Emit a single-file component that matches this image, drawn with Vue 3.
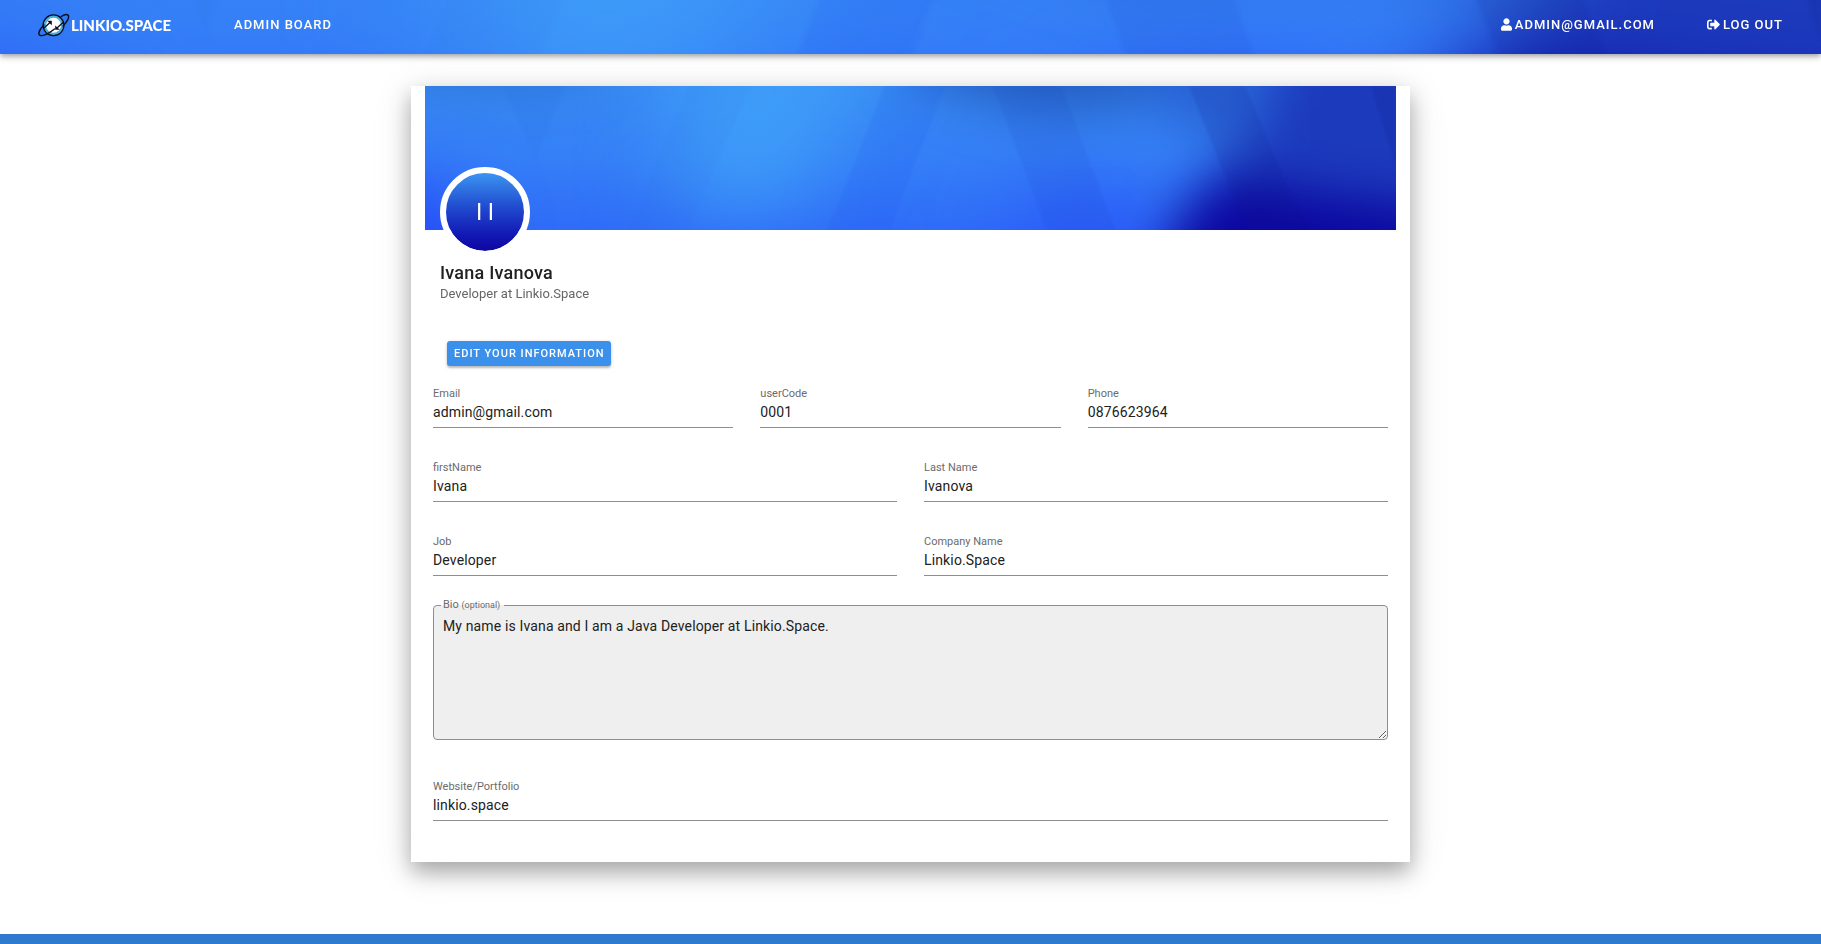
<script setup>
import { reactive } from 'vue'

const user = reactive({
  email: 'admin@gmail.com',
  code: '0001',
  phone: '0876623964',
  first: 'Ivana',
  last: 'Ivanova',
  job: 'Developer',
  company: 'Linkio.Space',
  bio: 'My name is Ivana and I am a Java Developer at Linkio.Space.',
  website: 'linkio.space',
})

const rows = [
  [
    { key: 'email', label: 'Email' },
    { key: 'code', label: 'userCode' },
    { key: 'phone', label: 'Phone' },
  ],
  [
    { key: 'first', label: 'firstName' },
    { key: 'last', label: 'Last Name' },
  ],
  [
    { key: 'job', label: 'Job' },
    { key: 'company', label: 'Company Name' },
  ],
]
</script>

<template>
  <div class="page">
    <svg class="defs" aria-hidden="true">
      <defs>
        <linearGradient id="base" x1="0" y1="0" x2="0" y2="1">
          <stop offset="0" stop-color="#3889f3" />
          <stop offset="0.5" stop-color="#357ff7" />
          <stop offset="1" stop-color="#2f6cf7" />
        </linearGradient>
        <filter id="wide" x="-50%" y="-50%" width="200%" height="200%" color-interpolation-filters="sRGB">
          <feGaussianBlur stdDeviation="42" />
        </filter>
        <filter id="soft" x="-50%" y="-50%" width="200%" height="200%" color-interpolation-filters="sRGB">
          <feGaussianBlur stdDeviation="25" />
        </filter>
        <filter id="edge" x="-10%" y="-10%" width="120%" height="120%" color-interpolation-filters="sRGB">
          <feGaussianBlur stdDeviation="1" />
        </filter>
        <symbol id="backdrop" viewBox="0 0 971 144" preserveAspectRatio="xMidYMid slice">
          <rect width="971" height="144" fill="url(#base)" />
          <g filter="url(#wide)">
            <ellipse cx="-30" cy="180" rx="70" ry="80" fill="#2343f8" />
            <path d="M250 -80 H480 L370 120 H250Z" fill="#3e9cf8" />
            <ellipse cx="660" cy="160" rx="70" ry="50" fill="#2a56f8" />
          </g>
          <g filter="url(#soft)">
            <ellipse cx="60" cy="-30" rx="120" ry="28" fill="#2c70d4" />
            <path d="M480 -70 H760 V0 Q690 36 600 26 Q540 12 480 -14Z" fill="#255fc4" />
            <path d="M720 -70 H900 L820 56 Q760 50 720 16Z" fill="#2862d6" />
            <path d="M880 -70 H1090 V220 H715 L760 110 L830 50Z" fill="#1c3abc" />
            <path d="M700 250 L745 150 L800 92 L860 104 L1100 134 V250Z" fill="#0c06a0" />
          </g>
          <g filter="url(#edge)">
            <path d="M78 0 H140 L110 72Z" fill="#1e60d8" opacity="0.08" />
            <path d="M265 0 H325 L262 144 H203Z" fill="#1e60d8" opacity="0.05" />
            <path d="M460 0 H520 L464 144 H403Z" fill="#1c4ff0" opacity="0.12" />
            <path d="M568 0 H636 L690 144 H622Z" fill="#1a3cb8" opacity="0.09" />
            <path d="M764 0 H820 L880 144 H822Z" fill="#0d1a80" opacity="0.12" />
            <path d="M946 0 H971 V80Z" fill="#0d1a80" opacity="0.14" />
          </g>
        </symbol>
      </defs>
    </svg>

    <header class="navbar">
      <svg class="backdrop" aria-hidden="true"><use href="#backdrop" width="100%" height="100%" /></svg>
      <a class="brand" href="#">
        <svg class="planet" viewBox="0 0 32 24" aria-hidden="true">
          <circle cx="15.500" cy="12.300" r="9" fill="#fff" stroke="#4ab0e0" stroke-width="3" />
          <circle cx="15.500" cy="12.300" r="10.400" fill="none" stroke="#0a0f1c" stroke-width="1.300" />
          <path d="M6 12C1.500 16.500 0 20.500 1.500 22c2 2 9-1 15-6" fill="none" stroke="#0a0f1c" stroke-width="1.400" stroke-linecap="round" />
          <path d="M25 13C29.500 8.500 31.500 4 30.200 2.300c-1.300-1.500-4.200-.600-7 1.200" fill="none" stroke="#0a0f1c" stroke-width="1.400" stroke-linecap="round" />
          <path d="M5.500 15.500 12 9.500M25.500 9 19 15" stroke="#0a0f1c" stroke-width="1.300" fill="none" />
          <path d="M9.200 7.800H13.800V12.200Z" fill="#0a0f1c" />
          <path d="M21.800 16.800H17.200V12.400Z" fill="#0a0f1c" />
        </svg>
        <span>LINKIO.SPACE</span>
      </a>
      <nav class="links">
        <a href="#">Admin Board</a>
        <span class="grow"></span>
        <a href="#">
          <svg class="user-icon" viewBox="0 0 448 512" aria-hidden="true"><path fill="currentColor" d="M224 256c70.700 0 128-57.300 128-128S294.700 0 224 0 96 57.300 96 128s57.300 128 128 128zm89.600 32h-16.700c-22.200 10.200-46.900 16-72.900 16s-50.600-5.800-72.900-16h-16.700C60.200 288 0 348.200 0 422.400V464c0 26.500 21.500 48 48 48h352c26.500 0 48-21.500 48-48v-41.600c0-74.200-60.200-134.400-134.400-134.400z" /></svg>
          admin@gmail.com
        </a>
        <a href="#">
          <svg class="exit-icon" viewBox="0 0 512 512" aria-hidden="true"><path fill="currentColor" d="M497 273L329 441c-15 15-41 4.500-41-17v-96H152c-13.300 0-24-10.700-24-24v-96c0-13.300 10.700-24 24-24h136V88c0-21.400 25.900-32 41-17l168 168c9.300 9.400 9.300 24.600 0 34zM192 436v-40c0-6.600-5.400-12-12-12H96c-17.700 0-32-14.300-32-32V160c0-17.700 14.300-32 32-32h84c6.600 0 12-5.400 12-12V76c0-6.600-5.400-12-12-12H96c-53 0-96 43-96 96v192c0 53 43 96 96 96h84c6.600 0 12-5.400 12-12z" /></svg>
          Log out
        </a>
      </nav>
    </header>

    <main class="card">
      <div class="banner">
        <svg class="backdrop" aria-hidden="true"><use href="#backdrop" width="100%" height="100%" /></svg>
      </div>
      <section class="profile">
        <div class="avatar">I I</div>
        <h1>Ivana Ivanova</h1>
        <p>Developer at Linkio.Space</p>
        <button type="button" class="edit">Edit your information</button>
      </section>

      <form class="form" @submit.prevent>
        <div v-for="(row, i) in rows" :key="i" class="row">
          <div v-for="f in row" :key="f.key" class="field">
            <label :for="f.key">{{ f.label }}</label>
            <input :id="f.key" v-model="user[f.key]" type="text" readonly />
          </div>
        </div>
        <div class="outlined">
          <label for="bio">Bio <small>(optional)</small></label>
          <textarea id="bio" v-model="user.bio" readonly></textarea>
        </div>
        <div class="field">
          <label for="website">Website/Portfolio</label>
          <input id="website" v-model="user.website" type="text" readonly />
        </div>
      </form>
    </main>

    <footer class="footer"></footer>
  </div>
</template>

<style>
body {
  margin: 0;
  background: #fff;
}
</style>

<style scoped>
.page {
  display: flex;
  flex-direction: column;
  min-height: 100vh;
  font-family: Roboto, "Liberation Sans", sans-serif;
  color: #212121;
}
.page *,
.page {
  box-sizing: border-box;
}
.defs {
  position: absolute;
  width: 0;
  height: 0;
}
.backdrop {
  position: absolute;
  inset: 0;
  width: 100%;
  height: 100%;
}
.navbar {
  position: relative;
  z-index: 1;
  display: flex;
  align-items: center;
  height: 54px;
  padding: 0 38px 5px;
  box-shadow: 0 2px 4px -1px rgba(0, 0, 0, 0.2), 0 4px 5px rgba(0, 0, 0, 0.14),
    0 1px 10px rgba(0, 0, 0, 0.12);
}
.brand {
  position: relative;
  display: flex;
  align-items: center;
  gap: 1px;
  color: #fff;
  font: 900 15px/24px Lato, "Liberation Sans", sans-serif;
  text-decoration: none;
}
.planet {
  width: 32px;
  height: 24px;
}
.links {
  position: relative;
  display: flex;
  flex: 1;
  align-items: center;
  gap: 52px;
  margin-left: 63px;
}
.links a {
  display: flex;
  align-items: center;
  gap: 3px;
  color: #fff;
  font-size: 13px;
  font-weight: 500;
  line-height: 20px;
  letter-spacing: 1px;
  text-transform: uppercase;
  text-decoration: none;
}
.grow {
  flex: 1;
}
.user-icon {
  width: 11px;
  height: 13px;
}
.exit-icon {
  width: 13px;
  height: 13px;
}
.card {
  width: calc(100% - 32px);
  max-width: 999px;
  margin: 32px auto 72px;
  background: #fff;
  box-shadow: 0 10px 20px rgba(0, 0, 0, 0.3), 0 6px 40px rgba(0, 0, 0, 0.1);
}
.banner {
  position: relative;
  height: 144px;
  margin: 0 14px;
}
.profile {
  position: relative;
  margin-top: -63px;
  padding: 0 29px;
}
.avatar {
  display: flex;
  align-items: center;
  justify-content: center;
  width: 90px;
  height: 90px;
  border: 6px solid #fff;
  border-radius: 50%;
  background: linear-gradient(#3b94f2, #2049cd 45%, #1217b4 80%, #1006a0) padding-box;
  color: #fff;
  font-size: 23px;
}
h1 {
  margin: 4px 0 0;
  font-size: 18px;
  font-weight: 500;
  line-height: 24px;
  letter-spacing: 0.0125em;
}
.profile p {
  margin: 0;
  color: #666;
  font-size: 13px;
  line-height: 17px;
}
.edit {
  display: block;
  height: 25px;
  margin: 39px 0 0 7px;
  padding: 0 6px 0 7px;
  border: 0;
  border-radius: 3px;
  background: #3a90ea;
  box-shadow: 0 2px 2px rgba(0, 0, 0, 0.2), 0 1px 4px rgba(0, 0, 0, 0.14);
  color: #fff;
  font: 500 11px/25px Roboto, "Liberation Sans", sans-serif;
  letter-spacing: 1px;
  text-transform: uppercase;
}
.form {
  padding: 21px 22px 41px;
}
.row {
  display: grid;
  grid-auto-flow: column;
  grid-auto-columns: minmax(0, 1fr);
  gap: 27px;
  margin-bottom: 33px;
}
.field label {
  display: block;
  height: 13px;
  color: #6b6b6b;
  font-size: 11px;
  line-height: 14px;
}
.field input {
  display: block;
  width: 100%;
  height: 28px;
  padding: 0 0 3px;
  border: 0;
  border-bottom: 1px solid #8e8e8e;
  outline: none;
  background: transparent;
  color: #212121;
  font: 14px/24px Roboto, "Liberation Sans", sans-serif;
  letter-spacing: 0.01em;
}
.outlined {
  position: relative;
  margin: -4px 0 40px;
}
.outlined label {
  position: absolute;
  top: -7px;
  left: 8px;
  padding: 0 4px 0 2px;
  background: linear-gradient(#fff 7px, #efefef 7px);
  color: #6b6b6b;
  font-size: 11px;
  line-height: 14px;
}
.outlined small {
  font-size: 9px;
}
.outlined textarea {
  display: block;
  width: 100%;
  height: 135px;
  padding: 8px 9px;
  border: 1px solid #8e8e8e;
  border-radius: 4px;
  outline: none;
  background: #efefef;
  color: #212121;
  font: 14px/24px Roboto, "Liberation Sans", sans-serif;
  letter-spacing: 0.01em;
  resize: both;
}
.footer {
  height: 11px;
  margin-top: auto;
  background: #2f79cf;
}
</style>
